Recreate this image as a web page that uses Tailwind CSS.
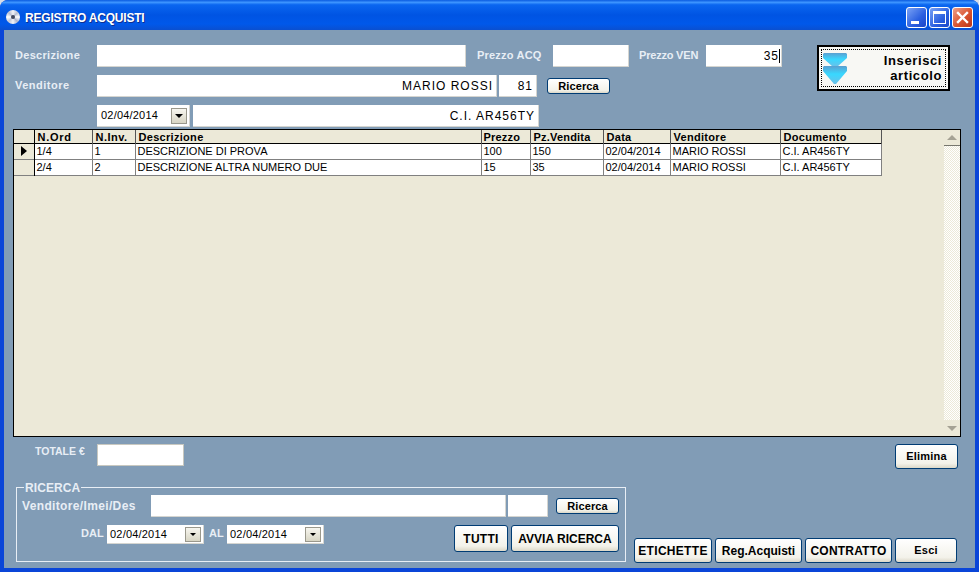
<!DOCTYPE html>
<html lang="en">
<head>
  <meta charset="UTF-8">
  <title>Registro Acquisti</title>
  <script src="https://cdn.jsdelivr.net/npm/@tailwindcss/browser@4"></script>
</head>
<body class="w-[979px] h-[572px] overflow-hidden bg-[#d8dde8] font-['Liberation_Sans',Arial,sans-serif] text-[11px] text-black">

  <div class="w-[979px] h-[572px] flex flex-col rounded-t-[8px] overflow-hidden bg-[#0a45d8]">
    <!-- title bar -->
    <div class="h-[30px] shrink-0 flex items-center pt-[5px] pl-[6px] pr-[6px] bg-[linear-gradient(180deg,#0a5be0_0%,#3d95ff_8%,#0a66f0_16%,#0054e3_50%,#0058ea_80%,#0a4fd0_100%)]">
      <div class="w-[14px] h-[14px] rounded-full bg-[conic-gradient(#f4f4f8,#b9bfd2,#ffffff,#aeb4cc,#f4f4f8,#c4c8d8,#ffffff,#b9bfd2,#f4f4f8)] flex items-center justify-center mb-[2px]">
        <div class="w-[4px] h-[4px] rounded-full bg-[#40465c]"></div>
      </div>
      <span class="ml-[5px] text-white font-bold text-[12px] tracking-[-0.2px] [text-shadow:1px_1px_0_#0f2f90]">REGISTRO ACQUISTI</span>
      <div class="ml-auto flex gap-[2px]">
        <div class="w-[21px] h-[21px] rounded-[3px] border border-white bg-[linear-gradient(135deg,#7aa2f5,#2a5fe0_60%,#1c46c8)] flex items-end pl-[4px] pb-[3px]">
          <div class="w-[8px] h-[3px] bg-white"></div>
        </div>
        <div class="w-[21px] h-[21px] rounded-[3px] border border-white bg-[linear-gradient(135deg,#7aa2f5,#2a5fe0_60%,#1c46c8)] flex items-center justify-center">
          <div class="w-[13px] h-[13px] border border-white border-t-[3px]"></div>
        </div>
        <div class="w-[21px] h-[21px] rounded-[3px] border border-white bg-[linear-gradient(135deg,#eda08a,#d9532f_55%,#b8341a)] flex items-center justify-center">
          <svg width="13" height="13" viewBox="0 0 13 13"><path d="M2 2 L11 11 M11 2 L2 11" stroke="#fff" stroke-width="2.4" stroke-linecap="square"/></svg>
        </div>
      </div>
    </div>

    <!-- form area -->
    <div class="relative flex-1 mx-[4px] mb-[4px] bg-[#819cb6] pt-[15px] pl-[9px] pr-[4px] flex flex-col">

      <!-- top fields -->
      <div class="flex h-[84px] items-start">
        <div class="flex flex-col">
          <div class="flex h-[22px] items-center">
            <label class="w-[84px] pl-[2px] pb-[2px] font-bold text-[#e8eef5] tracking-[0.3px]">Descrizione</label>
            <div class="w-[369px] h-[22px] bg-white border-r border-b border-[#d5d5d0]"></div>
            <label class="ml-[11px] w-[76px] pb-[2px] font-bold text-[#e8eef5] tracking-[0.2px]">Prezzo ACQ</label>
            <div class="w-[76px] h-[22px] bg-white border-r border-b border-[#d5d5d0]"></div>
            <label class="ml-[10px] w-[67px] pb-[2px] font-bold text-[#e8eef5] tracking-[-0.2px]">Prezzo VEN</label>
            <div class="w-[76px] h-[22px] bg-white border-r border-b border-[#d5d5d0] text-right pr-[1px] text-[12px] tracking-[1px] leading-[23px]"><span class="border-r border-black pr-[0px]">35</span></div>
          </div>
          <div class="flex h-[22px] items-center mt-[8px]">
            <label class="w-[84px] pl-[2px] pb-[2px] font-bold text-[#e8eef5] tracking-[0.5px]">Venditore</label>
            <div class="w-[400px] h-[22px] bg-white border-r border-b border-[#d5d5d0] text-right pr-[3px] text-[12px] tracking-[1px] leading-[23px]">MARIO ROSSI</div>
            <div class="ml-[2px] w-[38px] h-[22px] bg-white border-r border-b border-[#d5d5d0] text-right pr-[3px] text-[12px] tracking-[1px] leading-[23px]">81</div>
            <button class="ml-[10px] w-[63px] h-[16px] rounded-[3px] border border-[#003c74] bg-[linear-gradient(180deg,#fff,#f3f2ea_80%,#dcd8c8)] font-bold tracking-[0.1px] leading-[13px]">Ricerca</button>
          </div>
          <div class="flex h-[22px] items-center mt-[8px] pl-[84px]">
            <div class="w-[93px] h-[22px] bg-white border-r border-b border-[#d5d5d0] flex items-center pl-[4px] pr-[2px] text-[11px] tracking-[0.2px]">
              <span>02/04/2014</span>
              <div class="ml-auto w-[16px] h-[16px] bg-[linear-gradient(180deg,#f7f6ef,#d8d5c4)] border border-[#9a988c] flex items-center justify-center">
                <div class="w-0 h-0 border-x-[4px] border-x-transparent border-t-[4px] border-t-black"></div>
              </div>
            </div>
            <div class="ml-[3px] w-[346px] h-[22px] bg-white border-r border-b border-[#d5d5d0] text-right pr-[3px] text-[12px] tracking-[1px] leading-[23px]">C.I. AR456TY</div>
          </div>
        </div>
        <button class="ml-[35px] w-[133px] h-[46px] bg-[#f8f8f4] border-2 border-black flex items-center relative">
          <div class="absolute inset-[2px] border border-dotted border-black"></div>
          <svg class="ml-[4px]" width="24" height="31" viewBox="0 0 24 31">
            <defs>
              <linearGradient id="freccia" x1="0" y1="0" x2="0" y2="1">
                <stop offset="0" stop-color="#5b9fd0"/>
                <stop offset="0.45" stop-color="#38d8ff"/>
                <stop offset="1" stop-color="#6cc0e8"/>
              </linearGradient>
            </defs>
            <path d="M1 0 H23 L24 1 V5 L14 14 H10 L0 5 V1 Z" fill="url(#freccia)"/>
            <path d="M1 13 H23 L24 14 V18 L13 31 H11 L0 18 V14 Z" fill="url(#freccia)"/>
          </svg>
          <span class="ml-auto mr-[6px] text-right font-bold text-[13px] leading-[15px] tracking-[0.6px]">Inserisci<br>articolo</span>
        </button>
      </div>

      <!-- griglia -->
      <div class="ml-0 w-[948px] h-[308px] border border-black bg-[#ece9d8] flex">
        <div class="flex-1">
          <table class="table-fixed border-collapse text-[11px] leading-[12px]">
            <colgroup>
              <col class="w-[20px]"><col class="w-[58px]"><col class="w-[43px]"><col class="w-[346px]"><col class="w-[49px]"><col class="w-[73px]"><col class="w-[67px]"><col class="w-[110px]"><col class="w-[101px]">
            </colgroup>
            <tr class="h-[13px] border-b border-black font-bold text-left">
              <th class="border-r border-black"></th>
              <th class="border-r border-[#555] pl-[3px] tracking-[0.7px] font-bold align-bottom">N.Ord</th>
              <th class="border-r border-[#555] pl-[3px] tracking-[0.5px] font-bold align-bottom">N.Inv.</th>
              <th class="border-r border-[#555] pl-[3px] tracking-[0.3px] font-bold align-bottom">Descrizione</th>
              <th class="border-r border-[#555] pl-[2px] tracking-[0.2px] font-bold align-bottom">Prezzo</th>
              <th class="border-r border-[#555] pl-[3px] tracking-[0.2px] font-bold align-bottom">Pz.Vendita</th>
              <th class="border-r border-[#555] pl-[3px] tracking-[0.3px] font-bold align-bottom">Data</th>
              <th class="border-r border-[#555] pl-[3px] tracking-[0.3px] font-bold align-bottom">Venditore</th>
              <th class="border-r border-[#555] pl-[3px] tracking-[0.3px] font-bold align-bottom">Documento</th>
            </tr>
            <tr class="h-[16px] border-b border-[#808080]">
              <td class="border-r border-black"><div class="ml-[7px] w-0 h-0 border-y-[5px] border-y-transparent border-l-[6px] border-l-black"></div></td>
              <td class="bg-white border-r border-[#808080] pl-[2px]">1/4</td>
              <td class="bg-white border-r border-[#808080] pl-[2px]">1</td>
              <td class="bg-white border-r border-[#808080] pl-[2px]">DESCRIZIONE DI PROVA</td>
              <td class="bg-white border-r border-[#808080] pl-[2px]">100</td>
              <td class="bg-white border-r border-[#808080] pl-[2px]">150</td>
              <td class="bg-white border-r border-[#808080] pl-[2px]">02/04/2014</td>
              <td class="bg-white border-r border-[#808080] pl-[2px]">MARIO ROSSI</td>
              <td class="bg-white border-r border-[#808080] pl-[2px]">C.I. AR456TY</td>
            </tr>
            <tr class="h-[16px] border-b border-[#808080]">
              <td class="border-r border-black"></td>
              <td class="bg-white border-r border-[#808080] pl-[2px]">2/4</td>
              <td class="bg-white border-r border-[#808080] pl-[2px]">2</td>
              <td class="bg-white border-r border-[#808080] pl-[2px]">DESCRIZIONE ALTRA NUMERO DUE</td>
              <td class="bg-white border-r border-[#808080] pl-[2px]">15</td>
              <td class="bg-white border-r border-[#808080] pl-[2px]">35</td>
              <td class="bg-white border-r border-[#808080] pl-[2px]">02/04/2014</td>
              <td class="bg-white border-r border-[#808080] pl-[2px]">MARIO ROSSI</td>
              <td class="bg-white border-r border-[#808080] pl-[2px]">C.I. AR456TY</td>
            </tr>
          </table>
        </div>
        <!-- scrollbar -->
        <div class="w-[16px] flex flex-col bg-[repeating-conic-gradient(#ffffff_0_25%,#ece9d8_0_50%)] bg-[length:2px_2px]">
          <div class="h-[16px] bg-[#ece9d8] border-b border-[#77776e] flex items-center justify-center">
            <div class="w-0 h-0 border-x-[5px] border-x-transparent border-b-[5px] border-b-[#a5a294]"></div>
          </div>
          <div class="mt-auto h-[16px] bg-[#ece9d8] flex items-center justify-center">
            <div class="w-0 h-0 border-x-[5px] border-x-transparent border-t-[5px] border-t-[#a5a294]"></div>
          </div>
        </div>
      </div>

      <!-- totale -->
      <div class="flex h-[25px] mt-[7px] items-start">
        <label class="ml-[22px] w-[62px] font-bold text-[#e8eef5] text-[10.5px] leading-[14px]">TOTALE €</label>
        <div class="w-[87px] h-[22px] bg-white border border-[#c8c8c0]"></div>
        <button class="ml-[711px] w-[63px] h-[25px] rounded-[3px] border border-[#003c74] bg-[linear-gradient(180deg,#fff,#f3f2ea_80%,#dcd8c8)] font-bold tracking-[0.2px]">Elimina</button>
      </div>

      <!-- ricerca e bottoni -->
      <div class="flex items-end mt-[18px]">
        <div class="relative ml-[3px] w-[610px] h-[75px] border border-[#e8eef5] pl-[5px] pt-[7px]">
          <span class="absolute left-[7px] top-[-9px] px-[1px] bg-[#819cb6] font-bold text-[#e8eef5] text-[12px] tracking-[0.1px]">RICERCA</span>
          <div class="flex items-center h-[22px]">
            <label class="w-[129px] font-bold text-[#e8eef5] text-[12px] tracking-[0.35px]">Venditore/Imei/Des</label>
            <div class="w-[355px] h-[22px] bg-white border-r border-b border-[#d5d5d0]"></div>
            <div class="ml-[2px] w-[40px] h-[22px] bg-white border-r border-b border-[#d5d5d0]"></div>
            <button class="ml-[8px] w-[63px] h-[16px] rounded-[3px] border border-[#003c74] bg-[linear-gradient(180deg,#fff,#f3f2ea_80%,#dcd8c8)] font-bold tracking-[0.1px] leading-[13px]">Ricerca</button>
          </div>
          <div class="flex items-start mt-[8px]">
            <label class="ml-[59px] w-[26px] font-bold text-[#e8eef5] leading-[16px]">DAL</label>
            <div class="w-[97px] h-[19px] bg-white border-r border-b border-[#d5d5d0] flex items-center pl-[3px] pr-[2px] tracking-[0.2px]">
              <span>02/04/2014</span>
              <div class="ml-auto w-[16px] h-[15px] bg-[linear-gradient(180deg,#f7f6ef,#d8d5c4)] border border-[#9a988c] flex items-center justify-center">
                <div class="w-0 h-0 border-x-[3px] border-x-transparent border-t-[3px] border-t-black"></div>
              </div>
            </div>
            <label class="ml-[5px] w-[18px] font-bold text-[#e8eef5] leading-[16px]">AL</label>
            <div class="w-[97px] h-[19px] bg-white border-r border-b border-[#d5d5d0] flex items-center pl-[3px] pr-[2px] tracking-[0.2px]">
              <span>02/04/2014</span>
              <div class="ml-auto w-[16px] h-[15px] bg-[linear-gradient(180deg,#f7f6ef,#d8d5c4)] border border-[#9a988c] flex items-center justify-center">
                <div class="w-0 h-0 border-x-[3px] border-x-transparent border-t-[3px] border-t-black"></div>
              </div>
            </div>
            <button class="ml-[130px] w-[54px] h-[27px] rounded-[3px] border border-[#003c74] bg-[linear-gradient(180deg,#fff,#f3f2ea_80%,#dcd8c8)] font-bold text-[12px] tracking-[0.3px]">TUTTI</button>
            <button class="ml-[3px] w-[108px] h-[27px] rounded-[3px] border border-[#003c74] bg-[linear-gradient(180deg,#fff,#f3f2ea_80%,#dcd8c8)] font-bold text-[12px] whitespace-nowrap">AVVIA RICERCA</button>
          </div>
        </div>
        <div class="flex gap-[3px] ml-[8px] mb-[-1px]">
          <button class="w-[78px] h-[25px] rounded-[3px] border border-[#003c74] bg-[linear-gradient(180deg,#fff,#f3f2ea_80%,#dcd8c8)] font-bold text-[12px] tracking-[0.3px]">ETICHETTE</button>
          <button class="w-[87px] h-[25px] rounded-[3px] border border-[#003c74] bg-[linear-gradient(180deg,#fff,#f3f2ea_80%,#dcd8c8)] font-bold text-[12px]">Reg.Acquisti</button>
          <button class="w-[87px] h-[25px] rounded-[3px] border border-[#003c74] bg-[linear-gradient(180deg,#fff,#f3f2ea_80%,#dcd8c8)] font-bold text-[12px] tracking-[0.2px]">CONTRATTO</button>
          <button class="w-[62px] h-[25px] rounded-[3px] border border-[#003c74] bg-[linear-gradient(180deg,#fff,#f3f2ea_80%,#dcd8c8)] font-bold tracking-[0.2px]">Esci</button>
        </div>
      </div>
    </div>
  </div>

</body>
</html>
